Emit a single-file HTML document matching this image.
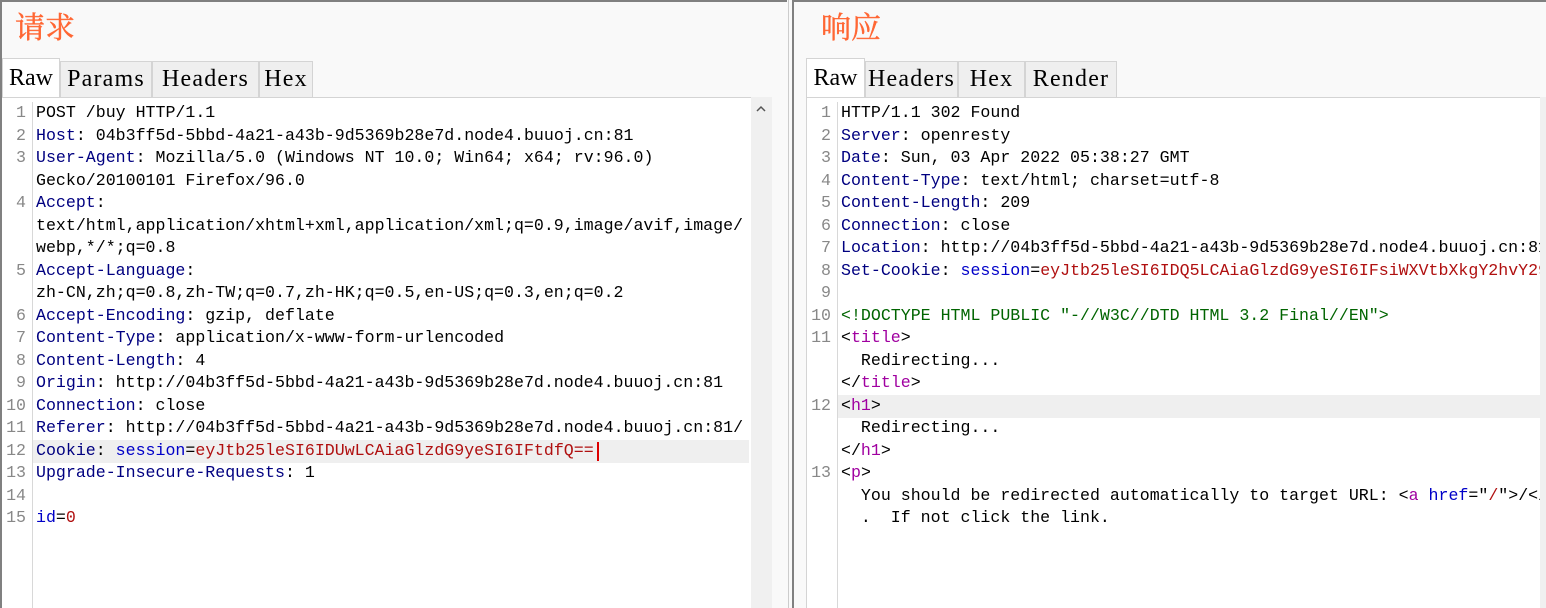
<!DOCTYPE html>
<html><head><meta charset="utf-8"><style>
*{margin:0;padding:0;box-sizing:border-box}
body{width:1546px;height:608px;background:#f9f9f9;position:relative;overflow:hidden;font-family:"Liberation Mono",monospace}
.abs{position:absolute}
.title{position:absolute;top:9px;font-family:"Liberation Serif","Noto Serif CJK SC",serif;font-size:30px;color:#ff6633;line-height:40px;-webkit-text-stroke:0.4px #ff6633}
.tab{position:absolute;top:61px;height:36px;background:#efefef;border:1px solid #d4d4d4;border-bottom:none;font-family:"Liberation Serif",serif;font-size:24px;letter-spacing:1.2px;line-height:34px;text-align:center;color:#000}
.tab.act{background:#fff;top:58px;height:40px;line-height:38px;letter-spacing:0}
.ed{position:absolute;top:97px;background:#fff}
.ln{position:absolute;font-size:16.6px;line-height:22.5px;white-space:pre;color:#000}
.num{position:absolute;font-size:16.6px;line-height:22.5px;color:#888;text-align:right;width:20px}
.k{color:#000080}.r{color:#b01010}.b{color:#0000c8}.g{color:#006400}.p{color:#a000a0}
.hl{position:absolute;background:#efefef;height:22.5px}
</style></head><body>
<div class="abs" style="left:0;top:0;width:787px;height:608px;border-top:2px solid #808080;border-left:2px solid #808080;background:#f9f9f9"></div>
<div class="title" style="left:15px">请求</div>
<div class="tab act" style="left:2px;width:58px">Raw</div>
<div class="tab" style="left:60px;width:92px">Params</div>
<div class="tab" style="left:152px;width:107px">Headers</div>
<div class="tab" style="left:259px;width:54px">Hex</div>
<div class="ed" style="left:2px;width:749px;height:511px;border-top:1px solid #d4d4d4"></div>
<div class="abs" style="left:751px;top:97px;width:21px;height:511px;background:#f0f0f0"></div>
<svg class="abs" style="left:755px;top:104px" width="12" height="10"><path d="M2 7 L6 3 L10 7" stroke="#555" stroke-width="1.5" fill="none"/></svg>
<div class="abs" style="left:788px;top:0;width:1px;height:608px;background:#ccc"></div>
<div class="abs" style="left:32px;top:102px;width:1px;height:506px;background:#d8d8d8"></div>
<div class="hl" style="left:33px;top:440px;width:716px"></div>
<div class="abs" style="left:597px;top:442px;width:2px;height:19px;background:#d00"></div>

<div class="num" style="left:6px;top:102px">1</div><div class="ln" style="left:36px;top:102px">POST /buy HTTP/1.1</div>
<div class="num" style="left:6px;top:124.5px">2</div><div class="ln" style="left:36px;top:124.5px"><span class="k">Host</span>: 04b3ff5d-5bbd-4a21-a43b-9d5369b28e7d.node4.buuoj.cn:81</div>
<div class="num" style="left:6px;top:147px">3</div><div class="ln" style="left:36px;top:147px"><span class="k">User-Agent</span>: Mozilla/5.0 (Windows NT 10.0; Win64; x64; rv:96.0)</div>
<div class="ln" style="left:36px;top:169.5px">Gecko/20100101 Firefox/96.0</div>
<div class="num" style="left:6px;top:192px">4</div><div class="ln" style="left:36px;top:192px"><span class="k">Accept</span>:</div>
<div class="ln" style="left:36px;top:214.5px">text/html,application/xhtml+xml,application/xml;q=0.9,image/avif,image/</div>
<div class="ln" style="left:36px;top:237px">webp,*/*;q=0.8</div>
<div class="num" style="left:6px;top:259.5px">5</div><div class="ln" style="left:36px;top:259.5px"><span class="k">Accept-Language</span>:</div>
<div class="ln" style="left:36px;top:282px">zh-CN,zh;q=0.8,zh-TW;q=0.7,zh-HK;q=0.5,en-US;q=0.3,en;q=0.2</div>
<div class="num" style="left:6px;top:304.5px">6</div><div class="ln" style="left:36px;top:304.5px"><span class="k">Accept-Encoding</span>: gzip, deflate</div>
<div class="num" style="left:6px;top:327px">7</div><div class="ln" style="left:36px;top:327px"><span class="k">Content-Type</span>: application/x-www-form-urlencoded</div>
<div class="num" style="left:6px;top:349.5px">8</div><div class="ln" style="left:36px;top:349.5px"><span class="k">Content-Length</span>: 4</div>
<div class="num" style="left:6px;top:372px">9</div><div class="ln" style="left:36px;top:372px"><span class="k">Origin</span>: http://04b3ff5d-5bbd-4a21-a43b-9d5369b28e7d.node4.buuoj.cn:81</div>
<div class="num" style="left:6px;top:394.5px">10</div><div class="ln" style="left:36px;top:394.5px"><span class="k">Connection</span>: close</div>
<div class="num" style="left:6px;top:417px">11</div><div class="ln" style="left:36px;top:417px"><span class="k">Referer</span>: http://04b3ff5d-5bbd-4a21-a43b-9d5369b28e7d.node4.buuoj.cn:81/</div>
<div class="num" style="left:6px;top:439.5px">12</div><div class="ln" style="left:36px;top:439.5px"><span class="k">Cookie</span>: <span class="b">session</span>=<span class="r">eyJtb25leSI6IDUwLCAiaGlzdG9yeSI6IFtdfQ==</span></div>
<div class="num" style="left:6px;top:462px">13</div><div class="ln" style="left:36px;top:462px"><span class="k">Upgrade-Insecure-Requests</span>: 1</div>
<div class="num" style="left:6px;top:484.5px">14</div>
<div class="num" style="left:6px;top:507px">15</div><div class="ln" style="left:36px;top:507px"><span class="b">id</span>=<span class="r">0</span></div>

<div class="abs" style="left:792px;top:0;width:754px;height:608px;border-top:2px solid #808080;border-left:2px solid #808080;background:#f9f9f9"></div>
<div class="title" style="left:821px">响应</div>
<div class="tab act" style="left:806px;width:59px">Raw</div>
<div class="tab" style="left:865px;width:93px">Headers</div>
<div class="tab" style="left:958px;width:67px">Hex</div>
<div class="tab" style="left:1025px;width:92px">Render</div>
<div class="ed" style="left:806px;width:740px;height:511px;border-top:1px solid #d4d4d4;border-left:1px solid #d4d4d4"></div>
<div class="abs" style="left:837px;top:102px;width:1px;height:506px;background:#d8d8d8"></div>
<div class="hl" style="left:838px;top:395px;width:708px"></div>

<div class="num" style="left:811px;top:102px">1</div><div class="ln" style="left:841px;top:102px">HTTP/1.1 302 Found</div>
<div class="num" style="left:811px;top:124.5px">2</div><div class="ln" style="left:841px;top:124.5px"><span class="k">Server</span>: openresty</div>
<div class="num" style="left:811px;top:147px">3</div><div class="ln" style="left:841px;top:147px"><span class="k">Date</span>: Sun, 03 Apr 2022 05:38:27 GMT</div>
<div class="num" style="left:811px;top:169.5px">4</div><div class="ln" style="left:841px;top:169.5px"><span class="k">Content-Type</span>: text/html; charset=utf-8</div>
<div class="num" style="left:811px;top:192px">5</div><div class="ln" style="left:841px;top:192px"><span class="k">Content-Length</span>: 209</div>
<div class="num" style="left:811px;top:214.5px">6</div><div class="ln" style="left:841px;top:214.5px"><span class="k">Connection</span>: close</div>
<div class="num" style="left:811px;top:237px">7</div><div class="ln" style="left:841px;top:237px"><span class="k">Location</span>: http://04b3ff5d-5bbd-4a21-a43b-9d5369b28e7d.node4.buuoj.cn:81</div>
<div class="num" style="left:811px;top:259.5px">8</div><div class="ln" style="left:841px;top:259.5px"><span class="k">Set-Cookie</span>: <span class="b">session</span>=<span class="r">eyJtb25leSI6IDQ5LCAiaGlzdG9yeSI6IFsiWXVtbXkgY2hvY29</span></div>
<div class="num" style="left:811px;top:282px">9</div>
<div class="num" style="left:811px;top:304.5px">10</div><div class="ln" style="left:841px;top:304.5px"><span class="g">&lt;!DOCTYPE HTML PUBLIC "-//W3C//DTD HTML 3.2 Final//EN"&gt;</span></div>
<div class="num" style="left:811px;top:327px">11</div><div class="ln" style="left:841px;top:327px">&lt;<span class="p">title</span>&gt;</div>
<div class="ln" style="left:841px;top:349.5px">  Redirecting...</div>
<div class="ln" style="left:841px;top:372px">&lt;/<span class="p">title</span>&gt;</div>
<div class="num" style="left:811px;top:394.5px">12</div><div class="ln" style="left:841px;top:394.5px">&lt;<span class="p">h1</span>&gt;</div>
<div class="ln" style="left:841px;top:417px">  Redirecting...</div>
<div class="ln" style="left:841px;top:439.5px">&lt;/<span class="p">h1</span>&gt;</div>
<div class="num" style="left:811px;top:462px">13</div><div class="ln" style="left:841px;top:462px">&lt;<span class="p">p</span>&gt;</div>
<div class="ln" style="left:841px;top:484.5px">  You should be redirected automatically to target URL: &lt;<span class="p">a</span> <span class="b">href</span>="<span class="r">/</span>"&gt;/&lt;/</div>
<div class="ln" style="left:841px;top:507px">  .  If not click the link.</div>
<div class="abs" style="left:1540px;top:97px;width:6px;height:511px;background:#f0f0f0"></div>
</body></html>
